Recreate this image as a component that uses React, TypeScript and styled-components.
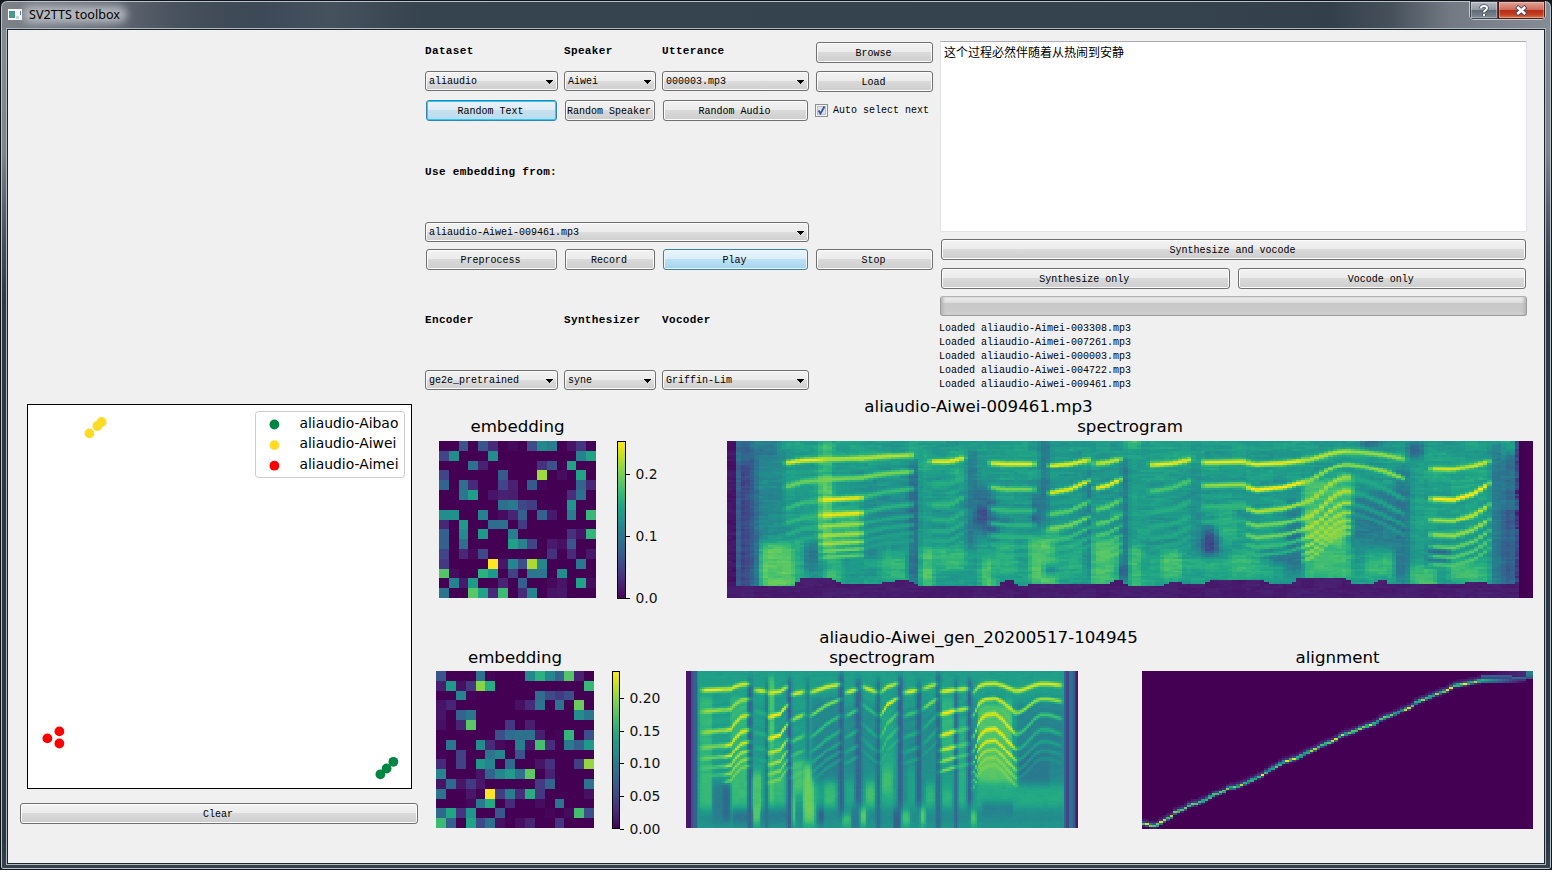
import React from 'react';
import styled, { createGlobalStyle, css } from 'styled-components';

/* ---------- colour map ---------- */

const VIRIDIS = [
  [68, 1, 84], [72, 20, 103], [72, 36, 117], [70, 52, 128], [65, 68, 135],
  [59, 82, 139], [53, 95, 141], [47, 108, 142], [42, 120, 142], [37, 132, 142],
  [33, 145, 140], [30, 156, 137], [34, 168, 132], [47, 180, 124], [68, 191, 112],
  [94, 201, 98], [122, 209, 81], [155, 217, 60], [189, 223, 38], [223, 227, 24],
  [253, 231, 37],
];

function viridis(t: number): string {
  const p = Math.max(0, Math.min(1, t)) * 20;
  const i = Math.min(19, Math.floor(p));
  const f = p - i;
  const c = VIRIDIS[i].map((a, k) => Math.round(a + (VIRIDIS[i + 1][k] - a) * f));
  return `rgb(${c.join(',')})`;
}

/* ---------- data: embeddings ---------- */

const EMBEDDING_LOADED = [
  [0, 0, 25, 0, 26, 12, 0, 2, 0, 22, 46, 42, 0, 5, 15, 1],
  [20, 48, 0, 0, 0, 48, 0, 0, 0, 0, 0, 0, 0, 0, 44, 58],
  [0, 0, 0, 37, 9, 0, 0, 0, 0, 0, 14, 25, 0, 58, 0, 0],
  [20, 0, 0, 0, 0, 0, 28, 0, 0, 0, 85, 0, 3, 0, 58, 0],
  [32, 0, 37, 12, 0, 0, 20, 9, 0, 28, 1, 0, 0, 0, 32, 11],
  [0, 0, 40, 56, 0, 5, 9, 8, 0, 0, 0, 0, 0, 13, 36, 0],
  [0, 0, 0, 0, 0, 0, 36, 41, 21, 18, 0, 0, 0, 52, 0, 0],
  [48, 50, 0, 0, 44, 0, 3, 10, 30, 0, 31, 7, 0, 42, 0, 67],
  [11, 0, 55, 0, 0, 35, 36, 0, 17, 0, 0, 0, 0, 0, 0, 0],
  [30, 0, 48, 0, 54, 0, 0, 43, 0, 0, 0, 0, 0, 14, 5, 66],
  [30, 0, 36, 0, 0, 0, 0, 57, 44, 20, 0, 7, 4, 26, 0, 0],
  [20, 0, 11, 2, 21, 0, 0, 0, 0, 0, 0, 14, 0, 12, 0, 6],
  [16, 0, 0, 0, 0, 100, 6, 46, 24, 87, 46, 0, 0, 0, 40, 0],
  [73, 3, 0, 0, 64, 54, 0, 19, 0, 39, 39, 0, 49, 0, 0, 0],
  [0, 44, 7, 55, 0, 0, 10, 0, 30, 0, 0, 2, 5, 0, 58, 3],
  [38, 0, 0, 74, 58, 12, 68, 0, 12, 45, 0, 5, 6, 0, 0, 0],
];

const EMBEDDING_GENERATED = [
  [26, 0, 0, 0, 37, 1, 0, 0, 0, 47, 64, 46, 32, 73, 9, 0],
  [8, 54, 4, 16, 82, 62, 0, 0, 0, 0, 0, 0, 0, 0, 0, 67],
  [0, 0, 45, 1, 0, 0, 0, 0, 0, 0, 35, 22, 17, 24, 0, 0],
  [5, 10, 0, 0, 0, 0, 0, 0, 4, 12, 38, 0, 38, 0, 77, 0],
  [5, 0, 32, 39, 0, 0, 0, 0, 0, 0, 0, 0, 0, 0, 48, 39],
  [4, 0, 10, 74, 0, 0, 0, 16, 0, 8, 0, 0, 0, 0, 0, 0],
  [0, 0, 0, 0, 0, 0, 24, 35, 37, 37, 8, 0, 1, 66, 0, 24],
  [0, 39, 0, 0, 48, 12, 2, 0, 43, 5, 70, 13, 0, 41, 30, 54],
  [1, 0, 19, 0, 0, 39, 46, 0, 25, 0, 0, 0, 0, 0, 0, 0],
  [12, 0, 19, 0, 53, 45, 0, 34, 0, 0, 5, 14, 0, 0, 18, 84],
  [45, 0, 0, 0, 5, 32, 46, 55, 37, 75, 0, 9, 0, 0, 0, 0],
  [5, 34, 6, 17, 6, 0, 0, 0, 0, 0, 17, 32, 0, 0, 0, 38],
  [38, 0, 0, 6, 0, 100, 18, 42, 13, 62, 16, 0, 0, 0, 0, 4],
  [0, 0, 0, 2, 41, 60, 0, 12, 0, 0, 3, 0, 39, 0, 0, 0],
  [34, 59, 15, 52, 0, 0, 27, 0, 0, 0, 0, 1, 0, 3, 70, 24],
  [68, 30, 0, 58, 22, 37, 4, 0, 4, 10, 0, 0, 15, 0, 0, 0],
];

/* ---------- data: spectrograms ---------- */

type Patch = [x0: number, x1: number, y0: number, y1: number, value: number];
type Voice = { pitch: number[]; peaks: number[] };
type Extent = { x0: number; x1: number; y0: number; y1: number; cols: number; rows: number };

const noise = (a: number, b: number) => {
  const s = Math.sin(a * 127.1 + b * 311.7) * 43758.5453;
  return s - Math.floor(s) - 0.5;
};

const sampleLine = (pts: number[], x: number) => {
  if (x <= pts[0]) return pts[1];
  for (let i = 2; i < pts.length; i += 2) {
    if (x <= pts[i]) {
      const t = (x - pts[i - 2]) / (pts[i] - pts[i - 2]);
      return pts[i - 1] + (pts[i + 1] - pts[i - 1]) * t;
    }
  }
  return pts[pts.length - 1];
};

const edge = (v: number, lo: number, hi: number, soft: number) =>
  1 / (1 + Math.exp(-(v - lo) / soft)) / (1 + Math.exp((v - hi) / soft));

/* Mel scale (Slaney): vertical offset <-> frequency. */
const MEL_PX = 10.78;
const MEL_MIN = 0.825;
const harmonic = (y: number, top: number, k: number) => {
  const hz = ((y - top) / MEL_PX + MEL_MIN) * 66.67 * k;
  const mel = hz < 1000 ? hz / 66.67 : 15 + 14.54 * Math.log(hz / 1000);
  return top + (mel - MEL_MIN) * MEL_PX;
};

function spectrogram(
  e: Extent, base: number, patches: Patch[], voices: Voice[], grain: number, softX: number, lineWidth: number,
  finish: (v: number, x: number, y: number, n: number) => number,
): number[][] {
  const out: number[][] = [];
  for (let r = 0; r < e.rows; r++) {
    const y = e.y0 + ((r + 0.5) * (e.y1 - e.y0)) / e.rows;
    const line: number[] = [];
    for (let c = 0; c < e.cols; c++) {
      const x = e.x0 + ((c + 0.5) * (e.x1 - e.x0)) / e.cols;
      const n = noise(c, r) * 0.4 + noise(Math.floor((c + r * 3) / 4), r + 99) * 0.9
        + noise(Math.floor(c / 3), Math.floor(r / 5) + 500) * 0.8;
      let v = base + n * grain;
      for (const [x0, x1, y0, y1, value] of patches) {
        if (x < x0 - 30 || x > x1 + 30 || y < y0 - 60 || y > y1 + 60) continue;
        v += (value + n * grain * 0.8 - v) * edge(x, x0, x1, softX) * edge(y, y0, y1, 8);
      }
      for (const g of voices) {
        const last = g.pitch[g.pitch.length - 2];
        if (x < g.pitch[0] - 12 || x > last + 12) continue;
        const fade = edge(x, g.pitch[0], last, 4);
        const y1 = sampleLine(g.pitch, x);
        g.peaks.forEach((peak, i) => {
          const d = (y - harmonic(y1, e.y0, i + 1)) / (i > 3 ? lineWidth * 0.8 : lineWidth);
          const w = Math.exp(-d * d) * fade;
          if (peak > v) v += (peak - v) * w;
          const dark = (Math.abs(d) - 2) / 0.8;
          if (i > 0 && i < 6) v -= 0.03 * Math.exp(-dark * dark) * fade;
        });
      }
      line.push(finish(v, x, y, n));
    }
    out.push(line);
  }
  return out;
}

const LOADED_PATCHES: Patch[] = [
  [117, 200, 60, 330, 0.47], [200, 300, 100, 340, 0.56], [430, 572, 180, 350, 0.5],
  [120, 225, 340, 480, 0.74], [225, 252, 325, 450, 0.63], [297, 337, 20, 130, 0.66],
  [297, 337, 130, 350, 0.77], [337, 425, 235, 350, 0.69], [320, 370, 350, 480, 0.66],
  [480, 560, 380, 455, 0.65], [570, 600, 90, 480, 0.32], [572, 588, 20, 90, 0.66],
  [600, 642, 355, 480, 0.72], [600, 735, 100, 350, 0.55], [600, 625, 60, 130, 0.62],
  [650, 735, 350, 420, 0.66], [738, 772, 60, 360, 0.42], [762, 822, 170, 310, 0.38],
  [778, 797, 230, 262, 0.12], [780, 820, 385, 480, 0.71], [830, 890, 330, 440, 0.65],
  [938, 962, 200, 290, 0.31], [960, 988, 20, 280, 0.39], [700, 738, 115, 150, 0.68],
  [922, 1000, 325, 365, 0.78], [930, 1015, 365, 480, 0.71], [975, 1020, 295, 340, 0.7],
  [1020, 1090, 330, 440, 0.61], [1099, 1114, 120, 450, 0.36], [1115, 1198, 320, 480, 0.7],
  [1206, 1224, 90, 450, 0.34], [1228, 1270, 345, 480, 0.7], [1270, 1310, 380, 480, 0.6],
  [1225, 1262, 20, 48, 0.74], [1320, 1388, 365, 445, 0.71], [1415, 1440, 90, 440, 0.46],
  [1440, 1500, 290, 405, 0.36], [1454, 1486, 318, 388, 0.14], [1400, 1600, 375, 445, 0.61],
  [1530, 1610, 370, 430, 0.66], [1490, 1550, 235, 320, 0.64], [1590, 1690, 320, 440, 0.61],
  [1700, 1748, 220, 450, 0.42], [1650, 1745, 365, 395, 0.38], [1750, 1885, 150, 250, 0.72],
  [1750, 1882, 240, 345, 0.79], [1755, 1892, 340, 450, 0.67], [1895, 2030, 190, 355, 0.43],
  [1935, 2028, 370, 440, 0.67], [2025, 2072, 110, 450, 0.4], [2062, 2108, 46, 76, 0.24],
  [1925, 1985, 20, 46, 0.24], [2125, 2310, 90, 350, 0.58], [2070, 2150, 405, 480, 0.69],
  [2125, 2190, 350, 398, 0.38], [2190, 2315, 395, 460, 0.68], [255, 297, 340, 420, 0.4],
  [350, 490, 352, 376, 0.42], [760, 875, 272, 282, 0.2], [790, 840, 290, 305, 0.22],
  [1620, 1700, 368, 380, 0.3], [2316, 2346, 40, 470, 0.38], [2346, 2390, 70, 470, 0.36],
  [85, 112, 60, 480, 0.28], [50, 90, 90, 520, 0.19], [48, 100, 20, 90, 0.29],
  [100, 180, 20, 60, 0.42], [110, 170, 60, 74, 0.28], [2348, 2380, 230, 460, 0.28],
  [1860, 1900, 120, 240, 0.68], [1200, 1215, 400, 445, 0.18], [975, 1012, 415, 424, 0.14],
];

const LOADED_VOICES: Voice[] = [
  { pitch: [195, 98, 250, 90, 310, 88], peaks: [0.98, 0.78, 0.68, 0.66, 0.62, 0.6] },
  { pitch: [300, 87, 430, 84], peaks: [0.9, 0.8, 0.98, 0.97, 0.86, 0.87, 0.87, 0.8, 0.76] },
  { pitch: [420, 84, 500, 78, 580, 75], peaks: [0.9, 0.8, 0.68, 0.64, 0.6, 0.59, 0.57, 0.56] },
  { pitch: [630, 93, 690, 93, 735, 82], peaks: [0.98, 0.62, 0.66, 0.64, 0.62, 0.6, 0.6, 0.6] },
  { pitch: [808, 98, 860, 101, 945, 101], peaks: [0.98, 0.8, 0.67, 0.65, 0.64, 0.62, 0.6] },
  { pitch: [985, 107, 1050, 101, 1110, 88], peaks: [0.97, 0.96, 0.74, 0.8, 0.68, 0.62, 0.6] },
  { pitch: [1125, 100, 1160, 96, 1205, 86], peaks: [0.92, 0.98, 0.76, 0.75, 0.72, 0.7, 0.7, 0.74] },
  { pitch: [1290, 104, 1360, 99, 1415, 87], peaks: [0.98, 0.72, 0.62, 0.61, 0.6, 0.58, 0.57] },
  { pitch: [1445, 96, 1582, 94], peaks: [0.97, 0.85, 0.66, 0.62] },
  { pitch: [1578, 98, 1610, 102, 1690, 98, 1755, 90], peaks: [0.98, 1, 0.88, 0.8, 0.8, 0.68, 0.64] },
  { pitch: [1748, 91, 1780, 86, 1810, 76, 1840, 68, 1870, 64, 1895, 64], peaks: [0.9, 0.84, 0.86, 0.88, 0.88, 0.86, 0.86, 0.84, 0.82] },
  { pitch: [1888, 64, 1930, 67, 1990, 74, 2055, 86], peaks: [0.85, 0.84, 0.6, 0.58, 0.56, 0.52] },
  { pitch: [2130, 116, 2200, 118, 2260, 108, 2310, 92], peaks: [0.93, 1, 0.9, 0.85, 0.78, 0.75, 0.73] },
];

const FLOOR = [
  0, 466, 225, 466, 245, 447, 325, 446, 350, 455, 372, 466, 490, 460, 520, 454, 570, 452, 592, 466,
  840, 466, 852, 451, 880, 451, 890, 466, 1165, 464, 1180, 453, 1210, 453, 1222, 466, 1330, 466,
  1350, 457, 1385, 457, 1395, 465, 1455, 465, 1475, 450, 1630, 449, 1645, 464, 1718, 464, 1728, 448,
  1880, 447, 1895, 463, 1960, 463, 1972, 450, 2000, 450, 2012, 465, 2160, 465, 2280, 457, 2330, 463, 2440, 466,
];

const LOADED_SPECTROGRAM = spectrogram(
  { x0: 21, x1: 2439, y0: 33, y1: 504, cols: 177, rows: 80 },
  0.55, LOADED_PATCHES, LOADED_VOICES, 0.075, 5, 8,
  (v, x, y, n) => {
    if (x > 2398) return 0;
    if (y > sampleLine(FLOOR, x)) return 0.075 + n * 0.025;
    if (x > 2386) return 0.2 + n * 0.15;
    if (x < 48) return 0.05 + n * 0.04;
    return v;
  },
);

const GENERATED_PATCHES: Patch[] = [
  [56, 1150, 445, 520, 0.47], [60, 98, 110, 450, 0.67], [150, 203, 110, 450, 0.67],
  [100, 148, 150, 320, 0.58], [98, 150, 365, 510, 0.42], [128, 148, 380, 490, 0.33],
  [160, 212, 455, 510, 0.36], [216, 243, 345, 520, 0.74], [266, 282, 50, 440, 0.72],
  [280, 316, 240, 440, 0.66], [240, 325, 455, 520, 0.42], [335, 368, 300, 400, 0.72],
  [332, 346, 400, 520, 0.74], [370, 404, 310, 520, 0.77], [402, 415, 330, 440, 0.62],
  [395, 477, 110, 360, 0.47], [410, 480, 260, 360, 0.43], [415, 432, 450, 520, 0.28],
  [434, 466, 370, 440, 0.68], [486, 512, 465, 520, 0.75], [500, 522, 250, 430, 0.6],
  [490, 600, 140, 360, 0.49], [540, 559, 445, 520, 0.79], [558, 585, 368, 440, 0.7],
  [602, 640, 140, 440, 0.6], [606, 636, 330, 400, 0.69], [666, 690, 450, 520, 0.74],
  [670, 768, 150, 440, 0.49], [682, 706, 320, 440, 0.57], [720, 736, 445, 520, 0.79],
  [736, 764, 370, 440, 0.65], [783, 822, 120, 310, 0.66], [787, 816, 385, 440, 0.65],
  [834, 856, 180, 440, 0.64], [878, 890, 120, 370, 0.5], [873, 888, 455, 520, 0.79],
  [895, 995, 130, 375, 0.74], [995, 1015, 300, 380, 0.69], [890, 1010, 375, 440, 0.61],
  [1010, 1155, 130, 375, 0.46], [1015, 1110, 290, 378, 0.4], [1010, 1155, 378, 440, 0.61],
  [905, 1000, 430, 465, 0.42], [56, 1150, 492, 520, 0.54],
  [204, 216, 60, 520, 0.3], [255, 264, 70, 520, 0.36], [321, 334, 60, 520, 0.28],
  [378, 387, 60, 300, 0.4], [477, 490, 40, 460, 0.3], [525, 545, 60, 440, 0.33],
  [588, 601, 60, 520, 0.34], [653, 668, 50, 450, 0.29], [709, 723, 70, 440, 0.31],
  [768, 781, 40, 520, 0.34], [823, 833, 60, 520, 0.3], [862, 876, 60, 440, 0.3],
  [515, 538, 445, 520, 0.4], [640, 660, 450, 520, 0.3], [216, 243, 345, 450, 0.71],
];

const GENERATED_VOICES: Voice[] = [
  { pitch: [65, 90, 135, 87], peaks: [0.98, 0.85, 0.85, 0.8, 0.78, 0.72, 0.68] },
  { pitch: [132, 88, 152, 86, 170, 77, 185, 73, 208, 71], peaks: [0.95, 0.85, 0.92, 0.95, 0.94, 0.88, 0.84, 0.8] },
  { pitch: [225, 90, 258, 93], peaks: [0.97, 0.62, 0.62, 0.6, 0.58] },
  { pitch: [265, 98, 300, 93, 322, 80], peaks: [0.95, 1, 1, 0.92, 0.88, 0.83, 0.8] },
  { pitch: [335, 102, 372, 94], peaks: [0.98, 0.88, 0.74, 0.7, 0.68, 0.66] },
  { pitch: [392, 96, 440, 80, 480, 72], peaks: [0.95, 0.82, 0.68, 0.63, 0.6, 0.57, 0.55] },
  { pitch: [498, 96, 530, 88], peaks: [0.98, 0.74, 0.64, 0.62, 0.6] },
  { pitch: [548, 80, 590, 95], peaks: [0.95, 0.67, 0.6, 0.58, 0.56] },
  { pitch: [603, 95, 620, 80, 652, 70], peaks: [0.92, 0.97, 0.75, 0.68, 0.64] },
  { pitch: [673, 96, 712, 90], peaks: [0.98, 0.7, 0.62, 0.6, 0.58] },
  { pitch: [730, 85, 770, 71], peaks: [0.9, 0.82, 0.62, 0.6, 0.57] },
  { pitch: [780, 94, 828, 88], peaks: [0.98, 0.99, 0.97, 0.92, 0.86, 0.82] },
  { pitch: [830, 88, 864, 85], peaks: [0.95, 0.92, 0.74, 0.73, 0.72, 0.68] },
  { pitch: [880, 96, 892, 82, 905, 74, 920, 71, 945, 70, 965, 75, 985, 83, 1008, 92], peaks: [0.94, 0.92, 0.94, 0.96, 0.95, 0.87, 0.82, 0.8] },
  { pitch: [1003, 91, 1020, 91, 1040, 84, 1060, 76, 1080, 71, 1105, 71, 1145, 75], peaks: [0.95, 0.85, 0.7, 0.62, 0.57, 0.53, 0.5] },
];

const GENERATED_SPECTROGRAM = spectrogram(
  { x0: 18, x1: 1194, y0: 33, y1: 504, cols: 224, rows: 80 },
  0.56, GENERATED_PATCHES, GENERATED_VOICES, 0.018, 1.8, 7,
  (v, x) => {
    if (x < 33) return 0.06;
    if (x < 40) return 0.24;
    if (x < 50) return 0.3;
    if (x < 56) return 0.46;
    if (x > 1188) return 0.06;
    if (x > 1182) return 0.15;
    if (x > 1177) return 0.27;
    if (x > 1168) return 0.37;
    if (x > 1158) return 0.21;
    if (x > 1150) return 0.33;
    return v;
  },
);

/* ---------- data: alignment ---------- */

const ATTENTION = [
  21, 551, 40, 553, 50, 558, 66, 556, 85, 543, 110, 530, 120, 518, 150, 507, 165, 495, 185, 492, 214, 480,
  235, 466, 265, 456, 280, 442, 300, 441, 332, 428, 383, 404, 400, 391, 425, 378, 445, 366, 488, 353,
  510, 340, 543, 326, 562, 315, 597, 302, 615, 288, 658, 275, 680, 264, 722, 251, 740, 237, 775, 225,
  800, 212, 828, 200, 845, 185, 875, 174, 905, 161, 940, 149, 955, 136, 975, 134, 1010, 127, 1035, 122, 1110, 120,
];

const ALIGNMENT = Array.from({ length: 80 }, (_, r) => {
  const y = 93 + (r + 0.5) * 5.925;
  return Array.from({ length: 112 }, (_, c) => {
    const x = 21 + (c + 0.5) * 10.47;
    if (x > 1170) return y < 104 ? 0.42 : y < 110 ? 0.35 : y < 117 ? 0.26 : 0;
    if (x > 1035) {
      const lower = Math.exp(-(((y - 122) / 4) ** 2)) * Math.max(0, 0.88 - ((x - 1045) / 90) * 0.6);
      const upper = Math.exp(-(((y - 110 - (x > 1130 ? 5 : 0)) / 5) ** 2)) * 0.36;
      const haze = y < 110 ? 0.12 * ((x - 1035) / 135) : 0;
      return Math.max(lower, upper, haze);
    }
    const d = (y - sampleLine(ATTENTION, x)) / 4.6;
    const v = Math.exp(-d * d) * (0.82 + noise(c, 7) * 0.36);
    const halo = 0.15 * Math.exp(-(((d + 0.6) / 2.2) ** 2));
    const trace = x > 1090 && y > 160 ? 0.018 * Math.max(0, noise(c, r)) : 0;
    return Math.max(v > 0.07 ? v : 0, halo > 0.03 ? halo : 0, trace);
  });
});

/* ---------- chart components ---------- */

const Raster = styled.svg<{ $w: number; $h: number }>`
  display: block;
  width: ${(p) => p.$w}px;
  height: ${(p) => p.$h}px;
`;

function HeatMap({ grid, width, height, levels = 100 }: { grid: number[][]; width: number; height: number; levels?: number }) {
  const paths: string[] = Array(levels + 1).fill('');
  grid.forEach((row, r) => {
    let start = 0;
    const q = row.map((v) => Math.max(0, Math.min(levels, Math.round(v * levels))));
    for (let c = 1; c <= q.length; c++) {
      if (c === q.length || q[c] !== q[start]) {
        paths[q[start]] += `M${start} ${r}H${c}V${r + 1}H${start}Z`;
        start = c;
      }
    }
  });
  return (
    <Raster $w={width} $h={height} viewBox={`0 0 ${grid[0].length} ${grid.length}`} preserveAspectRatio="none" shapeRendering="crispEdges">
      {paths.map((d, i) => d && <path key={i} d={d} fill={viridis(i / levels)} />)}
    </Raster>
  );
}

const BarSvg = styled.svg`
  display: block;
  width: 60px;
  height: 172px;
  overflow: visible;
  font: 13.9px 'DejaVu Sans', sans-serif;
  fill: #111;
`;

function ColorBar({ id, width, ticks }: { id: string; width: number; ticks: [string, number][] }) {
  return (
    <BarSvg viewBox="0 0 60 172">
      <defs>
        <linearGradient id={id} x1="0" y1="1" x2="0" y2="0">
          {VIRIDIS.map((_, i) => <stop key={i} offset={i / 20} stopColor={viridis(i / 20)} />)}
        </linearGradient>
      </defs>
      <rect x="0.5" y="8.5" width={width} height="157" fill={`url(#${id})`} stroke="#000" />
      {ticks.map(([label, y]) => (
        <g key={label}>
          <path d={`M${width + 1} ${y + 8.5}h4`} stroke="#000" />
          <text x={width + 10.500} y={y + 12.500}>{label}</text>
        </g>
      ))}
    </BarSvg>
  );
}

const ScatterSvg = styled.svg`
  display: block;
  width: 385px;
  height: 385px;
  margin-left: 7px;
  font: 13.9px 'DejaVu Sans', sans-serif;
`;

const SPEAKERS = [
  { name: 'aliaudio-Aibao', color: '#008542', points: [[353.4, 370.3], [359.6, 364.5], [366.4, 357.8]] },
  { name: 'aliaudio-Aiwei', color: '#ffdb24', points: [[62.4, 29.4], [70.4, 22], [74.6, 18]] },
  { name: 'aliaudio-Aimei', color: '#ff0000', points: [[20.4, 334.4], [32.4, 327.4], [32.4, 339.5]] },
];

function Scatter() {
  return (
    <ScatterSvg viewBox="0 0 385 385">
      <rect x="0.5" y="0.5" width="384" height="384" fill="#fff" stroke="#000" />
      {SPEAKERS.map((s) => s.points.map(([x, y]) => <circle key={`${x}-${y}`} cx={x} cy={y} r="4.9" fill={s.color} />))}
      <rect x="228.5" y="7.5" width="149" height="66" rx="3" fill="#fff" stroke="#ccc" />
      {SPEAKERS.map((s, i) => (
        <g key={s.name}>
          <circle cx="247.4" cy={20.5 + i * 20.6} r="4.9" fill={s.color} />
          <text x="272.5" y={24 + i * 20.4} fill="#000">{s.name}</text>
        </g>
      ))}
    </ScatterSvg>
  );
}

/* ---------- window chrome ---------- */

const GlobalStyle = createGlobalStyle`
  *, *::before, *::after { box-sizing: border-box; }
  body { margin: 0; overflow: hidden; background: #14181d; }
`;

const Window = styled.div`
  width: 1552px;
  height: 870px;
  display: flex;
  flex-direction: column;
  padding: 0 6px 5px;
  border: 1px solid #10151b;
  border-radius: 7px 7px 3px 3px;
  box-shadow: inset 0 0 0 1px #b9c2c9;
  background:
    linear-gradient(90deg, #7d828a 0, #666c76 100px, #4a535f 170px, rgba(54, 68, 80, 0) 260px) 0 0 / 100% 29px no-repeat,
    linear-gradient(90deg, #36444f 0, #35434f 200px, #46515e 330px, #36444f 420px, #35434e 1180px, #33404b 1330px, #46505b 1390px, #737a84 1450px, #858c95 1552px) 0 0 / 100% 29px no-repeat,
    linear-gradient(180deg, #858c95 0, #7d858e 150px, #47525d 235px, #2c3943 300px, #2b3842 840px, #34444f 870px);
`;

const TitleBar = styled.header`
  display: flex;
  flex: 0 0 28px;
  align-items: flex-start;
  justify-content: space-between;
`;

const TitleGroup = styled.div`
  display: flex;
  align-items: center;
  gap: 7px;
  margin: 5px 0 0 1px;
  height: 17px;
`;

const TitleText = styled.span`
  position: relative;
  z-index: 0;
  font: 12.6px/17px 'Noto Sans', 'Open Sans', sans-serif;
  color: #000;
  &::before {
    content: '';
    position: absolute;
    z-index: -1;
    inset: 0 -7px 0 -6px;
    border-radius: 9px;
    background: rgba(205, 209, 215, 0.75);
    filter: blur(4px);
  }
`;

const CaptionButtons = styled.div`
  display: flex;
  height: 19px;
  margin-right: -1px;
  border: 1px solid #c3c9cf;
  border-top: 0;
  border-radius: 0 0 5px 5px;
  overflow: hidden;
`;

const CaptionButton = styled.span<{ $danger?: boolean }>`
  display: flex;
  align-items: center;
  justify-content: center;
  width: ${(p) => (p.$danger ? 47 : 28)}px;
  border: 1px solid ${(p) => (p.$danger ? '#4d1d1b' : '#39424d')};
  background: ${(p) =>
    p.$danger
      ? 'linear-gradient(#e0a397 0, #cf6c5c 48%, #b72b17 50%, #c2401f 80%, #dd7a55 100%)'
      : 'linear-gradient(#b6bcc3 0, #8f97a1 48%, #5f6975 50%, #808993 100%)'};
  box-shadow: inset 0 0 0 1px rgba(255, 255, 255, 0.3);
`;

const Client = styled.main`
  flex: 1;
  background: #f0f0f0;
  border: 1px solid #1c242b;
  outline: 1px solid #aeb7bd;
  display: flex;
  flex-direction: column;
`;

/* ---------- form controls ---------- */

const uiFont = css`
  font-family: 'Liberation Mono', 'Noto Sans CJK SC', monospace;
  font-size: 10px;
  color: #000;
`;

const Button = styled.button<{ $tone?: 'focus' | 'hot'; $grow?: number }>`
  ${uiFont}
  height: 21px;
  margin: 0 1px;
  padding: 2px 2px 0 0;
  white-space: nowrap;
  border-radius: 3px;
  flex: ${(p) => p.$grow ?? 'none'};
  border: 1px solid #707070;
  box-shadow: inset 0 0 0 1px #fcfcfc;
  background: linear-gradient(#f3f3f3 0, #ebebeb 48%, #dadada 50%, #cdcdcd 100%);
  ${(p) => p.$tone === 'hot' && css`
    border-color: #3c7fb1;
    box-shadow: inset 0 0 0 1px #ecf7fd;
    background: linear-gradient(#eaf5fb 0, #d9edf8 48%, #bce1f5 50%, #a7d3ec 100%);
  `}
  ${(p) => p.$tone === 'focus' && css`
    border-color: #2f86b4;
    box-shadow: inset 0 0 0 1px #2bcbfa;
    background: linear-gradient(#eaf4fa 0, #dcebf4 48%, #c5e0ef 50%, #bbdcee 100%);
  `}
`;

const ComboBox = styled.div<{ $span?: number }>`
  ${uiFont}
  display: flex;
  align-items: center;
  justify-content: space-between;
  height: 20px;
  padding: 1px 4px 0 3px;
  grid-column: span ${(p) => p.$span ?? 1};
  border: 1px solid #707070;
  border-radius: 3px;
  box-shadow: inset 0 0 0 1px #fafafa;
  background: linear-gradient(#f2f2f2 0, #ebebeb 48%, #dcdcdc 50%, #cfcfcf 100%);
`;

function Combo({ value, span }: { value: string; span?: number }) {
  return (
    <ComboBox $span={span}>
      <span>{value}</span>
      <svg width="7" height="4" viewBox="0 0 7 4" shapeRendering="crispEdges"><path d="M0 0h7v1H6v1H5v1H4v1H3V3H2V2H1V1H0z" /></svg>
    </ComboBox>
  );
}

const Heading = styled.div<{ $span?: number; $top?: boolean }>`
  ${uiFont}
  font-size: 11px;
  letter-spacing: 0.35px;
  font-weight: bold;
  line-height: 19px;
  white-space: nowrap;
  grid-column: span ${(p) => p.$span ?? 1};
  align-self: ${(p) => (p.$top ? 'start' : 'center')};
`;

const CheckLabel = styled.label`
  ${uiFont}
  display: flex;
  align-items: center;
  gap: 5px;
  height: 20px;
  white-space: nowrap;
`;

const Controls = styled.section`
  display: grid;
  grid-template-columns: 133px 92px 147px 119px;
  grid-template-rows: 29px 29px 22px 100px 27px 21px 100px 22px;
  column-gap: 6px;
  align-items: start;
  padding-top: 12px;
`;

const Filler = styled.span``;

const TopArea = styled.div`
  display: flex;
  gap: 6px;
  height: 366px;
  padding-left: 417px;
`;

const Synthesis = styled.section`
  width: 587px;
  padding-top: 11px;
  display: flex;
  flex-direction: column;
`;

const TextBox = styled.div`
  height: 191px;
  margin-bottom: 7px;
  padding: 1px 3px;
  background: #fff;
  border: 1px solid #e2e3ea;
  border-top-color: #abadb3;
  font: 12px/17px 'Noto Sans CJK SC', sans-serif;
  color: #000;
`;

const ButtonRow = styled.div<{ $gap: number }>`
  display: flex;
  gap: 6px;
  margin-bottom: ${(p) => p.$gap}px;
`;

const Progress = styled.div`
  height: 20px;
  border: 1px solid #9c9c9c;
  border-top-color: #b2b2b2;
  border-radius: 3px;
  background: linear-gradient(#efefef 0, #dedede 30%, #c9c9c9 34%, #cacaca 80%, #d6d6d6 100%);
  box-shadow: inset 3px 0 3px -1px #b4b4b4, inset -3px 0 3px -1px #b4b4b4;
`;

const Log = styled.div`
  ${uiFont}
  margin: 6px 0 0 -1px;
  line-height: 14px;
  white-space: pre;
`;

/* ---------- plots ---------- */

const BottomArea = styled.div`
  display: flex;
  padding-left: 12px;
`;

const Projection = styled.section`
  display: flex;
  flex-direction: column;
  width: 398px;
  margin-right: 7px;
  padding-top: 8px;
  gap: 14px;
`;

const ProjectionButton = styled(Button)`
  margin: 0;
`;

const Figures = styled.section`
  width: 1108px;
  padding-top: 1px;
  font: 16.67px/20px 'DejaVu Sans', sans-serif;
  color: #000;
  white-space: nowrap;
`;

const Figure = styled.div<{ $height: number }>`
  height: ${(p) => p.$height}px;
  text-align: center;
`;

const FigureTitle = styled.div`
  padding-right: 1px;
`;

const Axes = styled.div<{ $inset: number }>`
  display: flex;
  padding-left: ${(p) => p.$inset}px;
`;

const Panel = styled.div<{ $left?: number; $gap: number }>`
  display: flex;
  flex-direction: column;
  gap: ${(p) => p.$gap}px;
  margin-left: ${(p) => p.$left ?? 0}px;
`;

const BarSlot = styled.div<{ $left: number; $top: number }>`
  width: 60px;
  margin-left: ${(p) => p.$left}px;
  padding-top: ${(p) => p.$top}px;
  text-align: left;
`;

export default function App() {
  return (
    <>
      <GlobalStyle />
      <Window>
        <TitleBar>
          <TitleGroup>
            <svg width="14" height="11" viewBox="0 0 14 11">
              <rect width="14" height="11" fill="#fbfbfb" />
              <rect x="1" y="2" width="6" height="7" fill="#4a93a0" />
              <rect x="2" y="4" width="4" height="4" fill="#4e9b7e" />
              <rect x="8" y="7" width="3" height="3" fill="#d2d2d2" />
              <rect x="12" y="2" width="1" height="4" fill="#4773a5" />
            </svg>
            <TitleText>SV2TTS toolbox</TitleText>
          </TitleGroup>
          <CaptionButtons>
            <CaptionButton>
              <svg width="10" height="13" viewBox="0 0 10 13" fill="none">
                <path d="M2 4.2C2 1.2 8 1.2 8 4.2 8 6 5 6.2 5 8.3M5 10v2" stroke="#444b63" strokeWidth="3.6" />
                <path d="M2 4.2C2 1.2 8 1.2 8 4.2 8 6 5 6.2 5 8.3M5 10v2" stroke="#fff" strokeWidth="2" />
              </svg>
            </CaptionButton>
            <CaptionButton $danger>
              <svg width="13" height="11" viewBox="0 0 13 11" fill="none">
                <path d="M1.500 1.500l9.500 8M11 1.500l-9.500 8" stroke="#4a4a60" strokeWidth="4.3" />
                <path d="M2.200 2l8 7M10.200 2L2.200 9" stroke="#fff" strokeWidth="2.6" />
              </svg>
            </CaptionButton>
          </CaptionButtons>
        </TitleBar>

        <Client>
          <TopArea>
            <Controls>
              <Heading $top>Dataset</Heading>
              <Heading $top>Speaker</Heading>
              <Heading $top>Utterance</Heading>
              <Button>Browse</Button>

              <Combo value="aliaudio" />
              <Combo value="Aiwei" />
              <Combo value="000003.mp3" />
              <Button>Load</Button>

              <Button $tone="focus">Random Text</Button>
              <Button>Random Speaker</Button>
              <Button>Random Audio</Button>
              <CheckLabel>
                <svg width="13" height="13" viewBox="0 0 13 13">
                  <rect x="0.5" y="0.5" width="12" height="12" fill="#f4f4f4" stroke="#8e8f8f" />
                  <rect x="2.5" y="2.5" width="8" height="8" fill="#dfe3ea" stroke="#b9bfca" />
                  <path d="M3.5 6.5l2 3L9.5 2.5" fill="none" stroke="#3c56a4" strokeWidth="1.9" />
                </svg>
                Auto select next
              </CheckLabel>

              <Heading $span={4}>Use embedding from:</Heading>

              <Combo value="aliaudio-Aiwei-009461.mp3" span={3} />
              <Filler />

              <Button>Preprocess</Button>
              <Button>Record</Button>
              <Button $tone="hot">Play</Button>
              <Button>Stop</Button>

              <Heading>Encoder</Heading>
              <Heading>Synthesizer</Heading>
              <Heading $span={2}>Vocoder</Heading>

              <Combo value="ge2e_pretrained" />
              <Combo value="syne" />
              <Combo value="Griffin-Lim" />
            </Controls>

            <Synthesis>
              <TextBox>这个过程必然伴随着从热闹到安静</TextBox>
              <ButtonRow $gap={8}>
                <Button $grow={1}>Synthesize and vocode</Button>
              </ButtonRow>
              <ButtonRow $gap={7}>
                <Button $grow={1}>Synthesize only</Button>
                <Button $grow={1}>Vocode only</Button>
              </ButtonRow>
              <Progress />
              <Log>
                {['Aimei-003308', 'Aimei-007261', 'Aiwei-000003', 'Aiwei-004722', 'Aiwei-009461'].map((u) => (
                  <div key={u}>{`Loaded aliaudio-${u}.mp3`}</div>
                ))}
              </Log>
            </Synthesis>
          </TopArea>

          <BottomArea>
            <Projection>
              <Scatter />
              <ProjectionButton>Clear</ProjectionButton>
            </Projection>

            <Figures>
              <Figure $height={231}>
                <FigureTitle>aliaudio-Aiwei-009461.mp3</FigureTitle>
                <Axes $inset={14}>
                  <Panel $gap={4}>
                    embedding
                    <HeatMap grid={EMBEDDING_LOADED.map((r) => r.map((v) => v / 100))} width={157} height={157} />
                  </Panel>
                  <BarSlot $left={21} $top={16}>
                    <ColorBar id="bar-loaded" width={8} ticks={[['0.2', 33], ['0.1', 95], ['0.0', 157]]} />
                  </BarSlot>
                  <Panel $left={50} $gap={4}>
                    spectrogram
                    <HeatMap grid={LOADED_SPECTROGRAM} width={806} height={157} />
                  </Panel>
                </Axes>
              </Figure>
              <Figure $height={220}>
                <FigureTitle>aliaudio-Aiwei_gen_20200517-104945</FigureTitle>
                <Axes $inset={11}>
                  <Panel $gap={3}>
                    embedding
                    <HeatMap grid={EMBEDDING_GENERATED.map((r) => r.map((v) => v / 100))} width={158} height={157} />
                  </Panel>
                  <BarSlot $left={18} $top={15}>
                    <ColorBar
                      id="bar-generated"
                      width={7}
                      ticks={[['0.20', 27], ['0.15', 60], ['0.10', 92], ['0.05', 125], ['0.00', 158]]}
                    />
                  </BarSlot>
                  <Panel $left={14} $gap={3}>
                    spectrogram
                    <HeatMap grid={GENERATED_SPECTROGRAM} width={392} height={157} />
                  </Panel>
                  <Panel $left={64} $gap={3}>
                    alignment
                    <HeatMap grid={ALIGNMENT} width={391} height={158} />
                  </Panel>
                </Axes>
              </Figure>
            </Figures>
          </BottomArea>
        </Client>
      </Window>
    </>
  );
}
